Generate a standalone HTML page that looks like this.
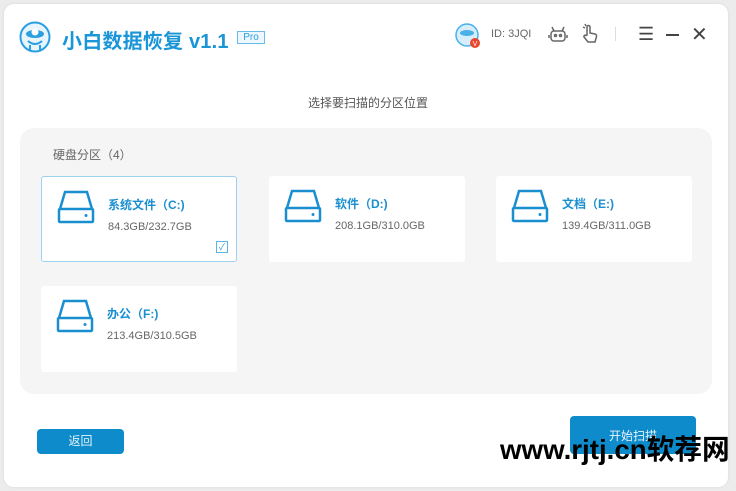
<!DOCTYPE html><html><head><meta charset="utf-8"><style>
*{margin:0;padding:0;box-sizing:border-box}
body{width:736px;height:491px;background:#ececec;font-family:"Liberation Sans","Noto Sans CJK SC",sans-serif;position:relative;overflow:hidden}
.win{position:absolute;left:4px;top:4px;width:724px;height:483px;background:#fff;border-radius:10px;box-shadow:0 0 3px rgba(0,0,0,0.08)}
.abs{position:absolute}
.panel{position:absolute;left:20px;top:128px;width:692px;height:266px;background:#f5f5f5;border-radius:14px}
.card{position:absolute;width:196px;height:86px;background:#fff;border-radius:3px}
.card.sel{border:1px solid #9ed0f0}
.card svg{position:absolute;left:14px;top:10px}
.card .n{position:absolute;left:66px;top:19px;font-size:12px;color:#1a8fd0;font-weight:bold}
.card .s{position:absolute;left:66px;top:44px;font-size:11px;color:#666}
.btn{position:absolute;background:#0e8bcb;color:#e8f4fb;font-size:12px;text-align:center;border-radius:4px}
</style></head><body>
<div class="win"></div>
<svg class="abs" style="left:19px;top:21px" width="32" height="32" viewBox="0 0 32 32"><circle cx="16" cy="16" r="14.5" fill="#e8f5fd" stroke="#2aa0e2" stroke-width="2"/><ellipse cx="16" cy="13" rx="9" ry="4" fill="#2aa0e2"/><circle cx="16" cy="11" r="3.5" fill="#fff"/><path d="M9 20 Q16 26 23 20 M11 24 L11 29 M21 24 L21 29" stroke="#2aa0e2" stroke-width="2" fill="none"/></svg>
<div class="abs" style="left:62px;top:25px;font-size:20px;font-weight:bold;color:#1a95d8;letter-spacing:0.2px">小白数据恢复 v1.1</div>
<div class="abs" style="left:237px;top:31px;width:28px;height:13px;border:1px solid #6bbde9;background:#eef7fd;color:#2aa0e2;font-size:10px;line-height:11px;text-align:center">Pro</div>
<svg class="abs" style="left:455px;top:23px" width="30" height="28" viewBox="0 0 30 28"><circle cx="12" cy="12" r="11" fill="#d6eefb" stroke="#4ab0e8" stroke-width="1.5"/><ellipse cx="12" cy="10" rx="7" ry="3" fill="#4ab0e8"/><circle cx="20" cy="20" r="5" fill="#e8452c"/><text x="20" y="23" font-size="7" fill="#fff" text-anchor="middle" font-family="Liberation Sans">V</text></svg>
<div class="abs" style="left:491px;top:28px;font-size:11px;color:#666">ID: 3JQI</div>
<svg class="abs" style="left:548px;top:24px" width="20" height="20" viewBox="0 0 20 20" fill="none" stroke="#666" stroke-width="1.5"><rect x="3" y="7" width="14" height="10" rx="3"/><path d="M6 7 L4 3 M14 7 L16 3"/><circle cx="7.5" cy="11.5" r="1"/><circle cx="12.5" cy="11.5" r="1"/><path d="M1 11v3M19 11v3"/></svg>
<svg class="abs" style="left:581px;top:23px" width="18" height="22" viewBox="0 0 18 22" fill="none" stroke="#666" stroke-width="1.5"><path d="M6 12 V4 a1.5 1.5 0 0 1 3 0 V10 l5 1 a2 2 0 0 1 1.5 2.5 L14 19 H7 L3 14 a1.3 1.3 0 0 1 2-1.5Z"/><path d="M2 4 L4 5 M4 1 L5 3"/></svg>
<div class="abs" style="left:615px;top:27px;width:1px;height:14px;background:#ddd"></div>
<div class="abs" style="left:638px;top:27px;font-size:18px;color:#444;line-height:14px">☰</div>
<div class="abs" style="left:666px;top:34px;width:13px;height:1.5px;background:#444"></div>
<div class="abs" style="left:691px;top:22px;font-size:20px;color:#444">✕</div>
<div class="abs" style="left:0;width:736px;top:94px;text-align:center;font-size:12px;color:#555">选择要扫描的分区位置</div>
<div class="panel"></div>
<div class="abs" style="left:53px;top:146px;font-size:12px;color:#666">硬盘分区（4）</div>
<div class="card sel" style="left:41px;top:176px"><svg width="40" height="40" viewBox="0 0 40 40" fill="none" stroke="#1a8fd0" stroke-width="2.5"><path d="M4 22 L9 5 H31 L36 22"/><rect x="3" y="22" width="34" height="13" rx="1"/><circle cx="30" cy="28.5" r="1.5" fill="#1a8fd0" stroke="none"/></svg><div class="n">系统文件（C:)</div><div class="s">84.3GB/232.7GB</div><div class="abs" style="left:174px;top:64px;width:12px;height:12px;border:1px solid #5bb3e6;color:#2aa0e2;font-size:9px;line-height:10px;text-align:center">✓</div></div>
<div class="card" style="left:269px;top:176px"><svg width="40" height="40" viewBox="0 0 40 40" fill="none" stroke="#1a8fd0" stroke-width="2.5"><path d="M4 22 L9 5 H31 L36 22"/><rect x="3" y="22" width="34" height="13" rx="1"/><circle cx="30" cy="28.5" r="1.5" fill="#1a8fd0" stroke="none"/></svg><div class="n">软件（D:)</div><div class="s">208.1GB/310.0GB</div></div>
<div class="card" style="left:496px;top:176px"><svg width="40" height="40" viewBox="0 0 40 40" fill="none" stroke="#1a8fd0" stroke-width="2.5"><path d="M4 22 L9 5 H31 L36 22"/><rect x="3" y="22" width="34" height="13" rx="1"/><circle cx="30" cy="28.5" r="1.5" fill="#1a8fd0" stroke="none"/></svg><div class="n">文档（E:)</div><div class="s">139.4GB/311.0GB</div></div>
<div class="card" style="left:41px;top:286px"><svg width="40" height="40" viewBox="0 0 40 40" fill="none" stroke="#1a8fd0" stroke-width="2.5"><path d="M4 22 L9 5 H31 L36 22"/><rect x="3" y="22" width="34" height="13" rx="1"/><circle cx="30" cy="28.5" r="1.5" fill="#1a8fd0" stroke="none"/></svg><div class="n">办公（F:)</div><div class="s">213.4GB/310.5GB</div></div>
<div class="btn" style="left:37px;top:429px;width:87px;height:25px;line-height:25px">返回</div>
<div class="btn" style="left:570px;top:416px;width:126px;height:38px;line-height:40px;border-radius:4px">开始扫描</div>
<div class="abs" style="left:500px;top:427px;font-size:27.7px;font-weight:bold;color:#000;letter-spacing:0px;white-space:nowrap">www.rjtj.cn软荐网</div>
</body></html>
